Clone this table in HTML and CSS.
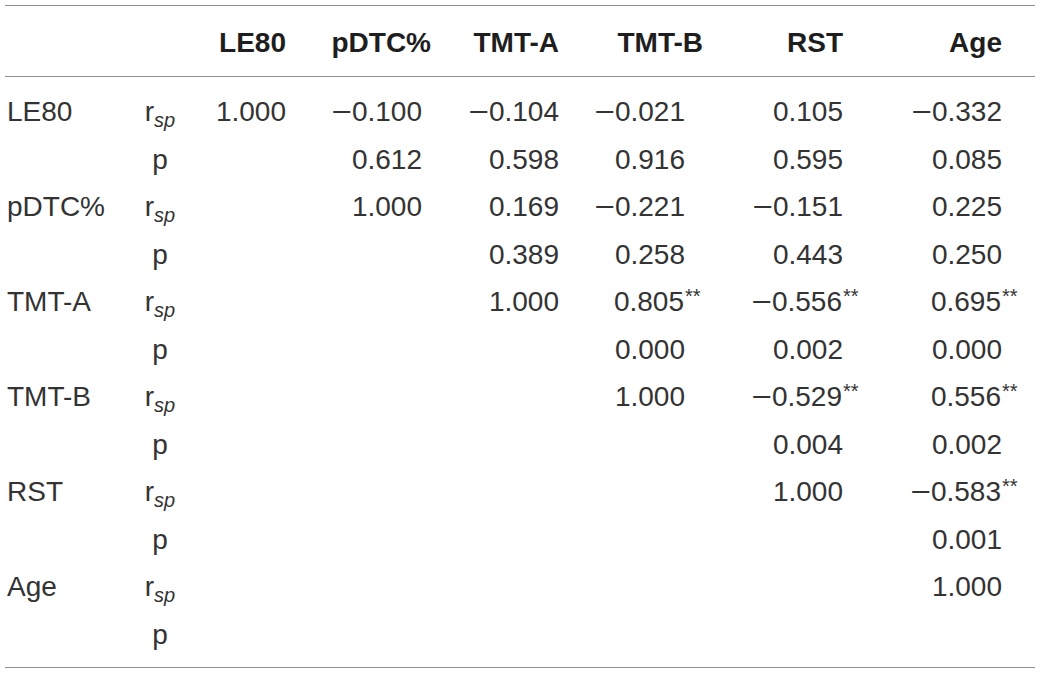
FILE: index.html
```html
<!DOCTYPE html>
<html>
<head>
<meta charset="utf-8">
<link rel="stylesheet" href="styles.css">
</head>
<body>
<div class="wrap">
<table class="corr">
  <colgroup>
    <col class="c-label"><col class="c-stat"><col class="c-le"><col class="c-pd"><col class="c-ta"><col class="c-tb"><col class="c-rst"><col class="c-age"><col class="c-end">
  </colgroup>
  <thead>
    <tr>
      <th></th><th></th><th class="num">LE80</th><th class="num">pDTC%</th><th class="num">TMT-A</th><th class="num">TMT-B</th><th class="num">RST</th><th class="num">Age</th><th></th>
    </tr>
  </thead>
  <tbody>
    <tr class="first">
      <td class="lab">LE80</td><td class="st">r<sub>sp</sub></td>
      <td class="num">1.000</td><td class="num pd"><span class="m">&minus;</span>0.100</td><td class="num"><span class="m">&minus;</span>0.104</td><td class="num tb"><span class="m">&minus;</span>0.021</td><td class="num">0.105</td><td class="num"><span class="m">&minus;</span>0.332</td><td></td>
    </tr>
    <tr>
      <td class="lab"></td><td class="st">p</td>
      <td class="num"></td><td class="num pd">0.612</td><td class="num">0.598</td><td class="num tb">0.916</td><td class="num">0.595</td><td class="num">0.085</td><td></td>
    </tr>
    <tr>
      <td class="lab">pDTC%</td><td class="st">r<sub>sp</sub></td>
      <td class="num"></td><td class="num pd">1.000</td><td class="num">0.169</td><td class="num tb"><span class="m">&minus;</span>0.221</td><td class="num"><span class="m">&minus;</span>0.151</td><td class="num">0.225</td><td></td>
    </tr>
    <tr>
      <td class="lab"></td><td class="st">p</td>
      <td class="num"></td><td class="num pd"></td><td class="num">0.389</td><td class="num tb">0.258</td><td class="num">0.443</td><td class="num">0.250</td><td></td>
    </tr>
    <tr>
      <td class="lab">TMT-A</td><td class="st">r<sub>sp</sub></td>
      <td class="num"></td><td class="num pd"></td><td class="num">1.000</td><td class="num tb">0.805<sup>**</sup></td><td class="num"><span class="m">&minus;</span>0.556<sup>**</sup></td><td class="num">0.695<sup>**</sup></td><td></td>
    </tr>
    <tr>
      <td class="lab"></td><td class="st">p</td>
      <td class="num"></td><td class="num pd"></td><td class="num"></td><td class="num tb">0.000</td><td class="num">0.002</td><td class="num">0.000</td><td></td>
    </tr>
    <tr>
      <td class="lab">TMT-B</td><td class="st">r<sub>sp</sub></td>
      <td class="num"></td><td class="num pd"></td><td class="num"></td><td class="num tb">1.000</td><td class="num"><span class="m">&minus;</span>0.529<sup>**</sup></td><td class="num">0.556<sup>**</sup></td><td></td>
    </tr>
    <tr>
      <td class="lab"></td><td class="st">p</td>
      <td class="num"></td><td class="num pd"></td><td class="num"></td><td class="num tb"></td><td class="num">0.004</td><td class="num">0.002</td><td></td>
    </tr>
    <tr>
      <td class="lab">RST</td><td class="st">r<sub>sp</sub></td>
      <td class="num"></td><td class="num pd"></td><td class="num"></td><td class="num tb"></td><td class="num">1.000</td><td class="num"><span class="m">&minus;</span>0.583<sup>**</sup></td><td></td>
    </tr>
    <tr>
      <td class="lab"></td><td class="st">p</td>
      <td class="num"></td><td class="num pd"></td><td class="num"></td><td class="num tb"></td><td class="num"></td><td class="num">0.001</td><td></td>
    </tr>
    <tr>
      <td class="lab">Age</td><td class="st">r<sub>sp</sub></td>
      <td class="num"></td><td class="num pd"></td><td class="num"></td><td class="num tb"></td><td class="num"></td><td class="num">1.000</td><td></td>
    </tr>
    <tr class="last">
      <td class="lab"></td><td class="st">p</td>
      <td class="num"></td><td class="num pd"></td><td class="num"></td><td class="num tb"></td><td class="num"></td><td class="num"></td><td></td>
    </tr>
  </tbody>
</table>
</div>
</body>
</html>
```

FILE: styles.css
```css
html, body {
  margin: 0;
  padding: 0;
  background: #ffffff;
}

.wrap {
  padding: 5px 5px 0 5px;
}

.corr {
  width: 1030px;
  table-layout: fixed;
  border-collapse: collapse;
  font-family: "Liberation Sans", Arial, sans-serif;
  font-size: 28px;
  color: #333333;
}

.c-label { width: 120px; }
.c-stat { width: 70px; }
.c-le { width: 91px; }
.c-pd { width: 145px; }
.c-ta { width: 128px; }
.c-tb { width: 144px; }
.c-rst { width: 140px; }
.c-age { width: 159px; }
.c-end { width: 33px; }

.corr thead tr {
  border-top: 1.5px solid #8f8f8f;
  border-bottom: 1.5px solid #8f8f8f;
}

.corr th {
  font-weight: bold;
  color: #1e1e1e;
  padding: 13px 0 10px 0;
  line-height: 47px;
  white-space: nowrap;
}

.corr td {
  padding: 0;
  line-height: 47.5px;
  height: 47.5px;
  white-space: nowrap;
  font-weight: normal;
}

.corr tbody tr.first td {
  padding-top: 11px;
}

.corr tbody tr.last td {
  padding-bottom: 9px;
}

.corr tbody tr.last {
  border-bottom: 1.5px solid #8f8f8f;
}

.num {
  text-align: right;
}

.lab {
  text-align: left;
  padding-left: 2px !important;
}

.st {
  text-align: center;
}

.corr td.pd {
  padding-right: 9px;
}

.corr td.tb {
  padding-right: 18px;
}

.m {
  display: inline-block;
  transform: scaleX(1.25);
  transform-origin: 60% 50%;
  margin-right: 2px;
}

sub {
  font-style: italic;
  font-size: 20px;
  line-height: 0;
  vertical-align: -6px;
}

sup {
  font-size: 20px;
  line-height: 0;
  vertical-align: 8px;
  display: inline-block;
  width: 0;
  overflow: visible;
  text-align: left;
  padding-left: 1px;
}
```
